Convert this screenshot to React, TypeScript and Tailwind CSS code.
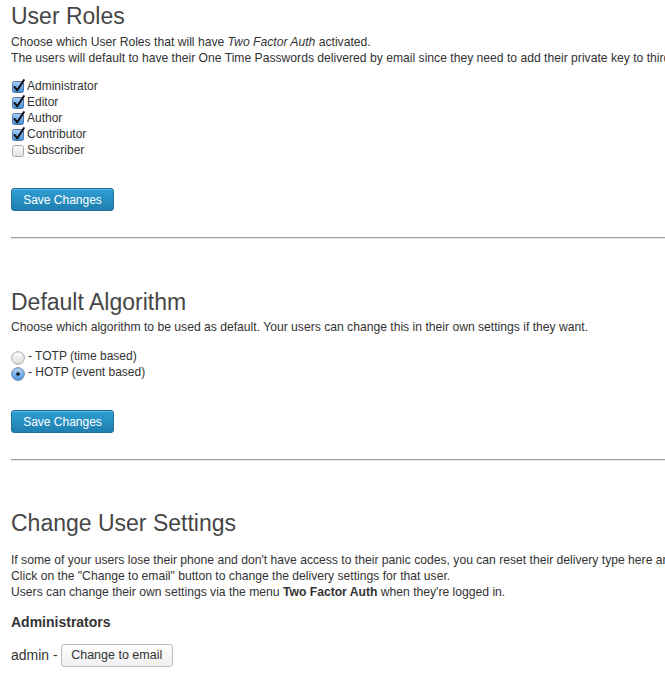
import React from "react"

const roles = [
  { name: "Administrator", checked: true },
  { name: "Editor", checked: true },
  { name: "Author", checked: true },
  { name: "Contributor", checked: true },
  { name: "Subscriber", checked: false },
]

function CheckBox({ checked }: { checked: boolean }) {
  return (
    <svg width="13" height="13" viewBox="0 0 13 13" className="ml-[1px] shrink-0 overflow-visible">
      <defs>
        <linearGradient id="cbOn" x1="0" y1="0" x2="0" y2="1">
          <stop offset="0" stopColor="#a9d0f5" />
          <stop offset="1" stopColor="#3f8ee0" />
        </linearGradient>
        <linearGradient id="cbOff" x1="0" y1="0" x2="0" y2="1">
          <stop offset="0" stopColor="#fdfdfd" />
          <stop offset="1" stopColor="#e2e2e2" />
        </linearGradient>
      </defs>
      <rect
        x="0.5"
        y="1.5"
        width="11"
        height="11"
        rx="2"
        fill={checked ? "url(#cbOn)" : "url(#cbOff)"}
        stroke={checked ? "#4c72a6" : "#a8a8a8"}
      />
      {checked && (
        <path d="M2.6 7 L5.3 10.3 L11.8 0.2" fill="none" stroke="#111" strokeWidth="2.1" strokeLinecap="round" strokeLinejoin="round" />
      )}
    </svg>
  )
}

function Radio({ checked }: { checked: boolean }) {
  return (
    <svg width="14" height="14" viewBox="0 0 14 14" className="mt-[4px] shrink-0">
      <defs>
        <linearGradient id="rOn" x1="0" y1="0" x2="0" y2="1">
          <stop offset="0" stopColor="#b6d7f7" />
          <stop offset="1" stopColor="#4d97e3" />
        </linearGradient>
        <linearGradient id="rOff" x1="0" y1="0" x2="0" y2="1">
          <stop offset="0" stopColor="#fdfdfd" />
          <stop offset="1" stopColor="#dedede" />
        </linearGradient>
      </defs>
      <circle
        cx="7"
        cy="7"
        r="6.3"
        fill={checked ? "url(#rOn)" : "url(#rOff)"}
        stroke={checked ? "#5679a8" : "#a5a5a5"}
      />
      {checked && <circle cx="7" cy="7" r="1.8" fill="#111" />}
    </svg>
  )
}

function SaveButton({ className }: { className: string }) {
  return (
    <button className={`${className} flex h-[23px] w-[103px] items-center justify-center rounded-[3px] border border-[#1f6f98] bg-gradient-to-b from-[#2f9fd3] to-[#1f7fb0] text-[12px] text-white shadow-[inset_0_1px_0_rgba(120,200,230,0.6)]`}>
      Save Changes
    </button>
  )
}

function Divider({ className }: { className: string }) {
  return <div className={`${className} h-[2px] border-t border-t-[#9d9d9d] border-b border-b-[#e3e3e3]`} />
}

export default function App() {
  return (
    <div className="h-[676px] w-full overflow-hidden bg-white pl-[11px] pt-[2px] font-['Liberation_Sans',Arial,sans-serif] text-[#333]">
      <h2 className="whitespace-nowrap text-[23px] leading-[28px] font-normal text-[#464646]">User Roles</h2>
      <div className="mt-[4px] whitespace-nowrap text-[12.15px] leading-[16px]">
        <div>
          Choose which User Roles that will have <i>Two Factor Auth</i> activated.
        </div>
        <div>
          The users will default to have their One Time Passwords delivered by email since they need to add their private key to third party apps first.
        </div>
      </div>

      <div className="mt-[12px] text-[12px] leading-[16px]">
        {roles.map((r) => (
          <label key={r.name} className="flex h-[16px] items-center gap-[2px]">
            <CheckBox checked={r.checked} />
            <span>{r.name}</span>
          </label>
        ))}
      </div>

      <SaveButton className="mt-[30px]" />
      <Divider className="mt-[26px]" />

      <h2 className="mt-[49px] whitespace-nowrap text-[23px] leading-[28px] font-normal text-[#464646]">Default Algorithm</h2>
      <div className="mt-[3px] whitespace-nowrap text-[12.15px] leading-[16px]">
        Choose which algorithm to be used as default. Your users can change this in their own settings if they want.
      </div>

      <div className="mt-[13px] text-[12px] leading-[16px]">
        <label className="flex h-[16px] items-center gap-[3px]">
          <Radio checked={false} />
          <span>- TOTP (time based)</span>
        </label>
        <label className="flex h-[16px] items-center gap-[3px]">
          <Radio checked={true} />
          <span>- HOTP (event based)</span>
        </label>
      </div>

      <SaveButton className="mt-[30px]" />
      <Divider className="mt-[26px]" />

      <h2 className="mt-[48px] whitespace-nowrap text-[23px] leading-[28px] font-normal text-[#464646]">Change User Settings</h2>
      <div className="mt-[15px] whitespace-nowrap text-[12.15px] leading-[16px]">
        <div>
          If some of your users lose their phone and don't have access to their panic codes, you can reset their delivery type here and they will receive them by email.
        </div>
        <div>Click on the "Change to email" button to change the delivery settings for that user.</div>
        <div>
          Users can change their own settings via the menu <b>Two Factor Auth</b> when they're logged in.
        </div>
      </div>

      <h3 className="mt-[13px] text-[14px] leading-[18px] font-bold">Administrators</h3>

      <div className="mt-[13px] flex items-center">
        <span className="text-[14px]">admin -</span>
        <button className="ml-[3px] flex h-[23px] w-[112px] items-center justify-center rounded-[3px] border border-[#bdbdbd] bg-gradient-to-b from-[#fefefe] to-[#f0f0f0] text-[12.5px] text-[#333]">
          Change to email
        </button>
      </div>
    </div>
  )
}
